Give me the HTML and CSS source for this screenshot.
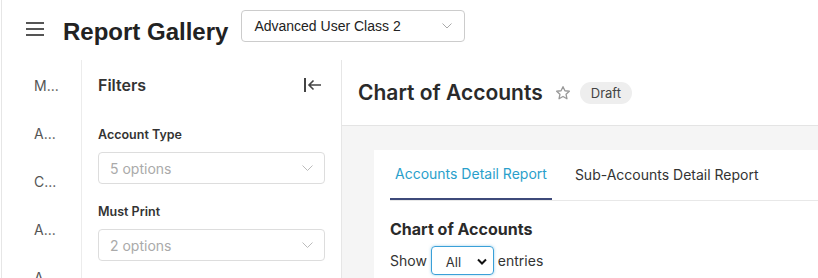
FILE: index.html
```html
<!DOCTYPE html>
<html lang="en">
<head>
    <meta charset="UTF-8">
    <meta name="viewport" content="width=device-width, initial-scale=1.0">
    <title>Report Gallery</title>
    <link rel="stylesheet" href="styles.css">
</head>
<body>
    <div class="page">
        <div class="top-bar">
            <svg class="menu-icon" width="18" height="16" viewBox="0 0 18 16">
                <path d="M0 2h18M0 8h18M0 14h18" stroke="#555" stroke-width="2" fill="none"/>
            </svg>
            <h1 class="page-title">Report Gallery</h1>
            <div class="class-picker">
                <span>Advanced User Class 2</span>
                <svg width="10" height="6" viewBox="0 0 10 6"><path d="M0.5 0.5L5 5L9.5 0.5" stroke="#aaa" fill="none"/></svg>
            </div>
        </div>

        <div class="workspace">
            <div class="rail">
                <div class="rail-item">M...</div>
                <div class="rail-item">A...</div>
                <div class="rail-item">C...</div>
                <div class="rail-item">A...</div>
                <div class="rail-item">A...</div>
            </div>

            <div class="filters">
                <div class="filters-head">
                    <h2>Filters</h2>
                    <svg width="18" height="16" viewBox="0 0 18 16">
                        <path d="M1 1v14" stroke="#444" stroke-width="2" fill="none"/>
                        <path d="M5 8h12M9.5 3.5L5 8l4.5 4.5" stroke="#444" stroke-width="1.6" fill="none"/>
                    </svg>
                </div>
                <label class="filter-label">Account Type</label>
                <div class="filter-select">
                    <span>5 options</span>
                    <svg width="11" height="6" viewBox="0 0 11 6"><path d="M0.5 0.5L5.5 5.5L10.5 0.5" stroke="#bbb" fill="none"/></svg>
                </div>
                <label class="filter-label second">Must Print</label>
                <div class="filter-select">
                    <span>2 options</span>
                    <svg width="11" height="6" viewBox="0 0 11 6"><path d="M0.5 0.5L5.5 5.5L10.5 0.5" stroke="#bbb" fill="none"/></svg>
                </div>
            </div>

            <div class="main">
                <div class="main-head">
                    <h2>Chart of Accounts</h2>
                    <svg class="star" width="16" height="16" viewBox="0 0 24 24">
                        <path d="M12 2.5l2.9 6.1 6.6.8-4.9 4.6 1.3 6.6L12 17.3l-5.9 3.3 1.3-6.6-4.9-4.6 6.6-.8z" stroke="#999" stroke-width="2" fill="none" stroke-linejoin="round"/>
                    </svg>
                    <span class="badge">Draft</span>
                </div>
                <div class="main-body">
                    <div class="card">
                        <div class="tabs">
                            <div class="tab active">Accounts Detail Report</div>
                            <div class="tab">Sub-Accounts Detail Report</div>
                        </div>
                        <h3>Chart of Accounts</h3>
                        <div class="show-row">
                            <span>Show</span>
                            <div class="entries-select">
                                <span>All</span>
                                <svg width="10" height="7" viewBox="0 0 10 7"><path d="M1 1.5L5 5.5L9 1.5" stroke="#111" stroke-width="2" fill="none"/></svg>
                            </div>
                            <span>entries</span>
                        </div>
                    </div>
                </div>
            </div>
        </div>
    </div>
</body>
</html>
```

FILE: styles.css
```css
body {
    margin: 0;
    padding: 0;
    width: 818px;
    height: 278px;
    overflow: hidden;
    background-color: #ffffff;
    font-family: Inter, "Noto Sans", sans-serif;
    color: #333;
}
.page {
    margin-left: 1px;
    border-left: 1px solid #e6e6e6;
    height: 278px;
    overflow: hidden;
}

/* top bar */
.top-bar {
    height: 60px;
    display: flex;
    align-items: center;
    padding-left: 24px;
}
.menu-icon {
    margin-top: -2px;
}
.page-title {
    margin: 0 0 0 19px;
    font-family: "Liberation Sans", Arial, sans-serif;
    font-size: 24px;
    font-weight: bold;
    color: #222;
    margin-top: 4px;
}
.class-picker {
    margin-left: 13px;
    margin-top: -8px;
    width: 224px;
    height: 32px;
    box-sizing: border-box;
    border: 1px solid #ccc;
    border-radius: 4px;
    display: flex;
    align-items: center;
    justify-content: space-between;
    padding: 0 12px 0 12px;
    font-family: "Liberation Sans", Arial, sans-serif;
    font-size: 14px;
    color: #222;
}

.workspace {
    display: flex;
    height: 218px;
}

/* left rail */
.rail {
    width: 79px;
    border-right: 1px solid #ececec;
    padding-top: 2px;
}
.rail-item {
    height: 48px;
    line-height: 48px;
    padding-left: 32px;
    font-size: 14px;
    color: #555;
}

/* filters */
.filters {
    width: 227px;
    padding: 0 16px;
    border-right: 1px solid #e6e6e6;
}
.filters-head {
    height: 50px;
    display: flex;
    align-items: center;
    justify-content: space-between;
    padding-right: 3px;
}
.filters-head h2 {
    margin: 0;
    font-size: 16px;
    font-weight: 600;
    color: #333;
}
.filter-label {
    display: block;
    margin-top: 16px;
    margin-bottom: 8px;
    line-height: 18px;
    font-size: 12.5px;
    font-weight: 600;
    color: #333;
}
.filter-label.second {
    margin-top: 19px;
    margin-bottom: 8px;
}
.filter-select {
    height: 32px;
    box-sizing: border-box;
    border: 1px solid #ddd;
    border-radius: 4px;
    display: flex;
    align-items: center;
    justify-content: space-between;
    padding: 0 11px;
    font-size: 14px;
    color: #aaa;
}

/* main */
.main {
    flex: 1;
}
.main-head {
    height: 65px;
    border-bottom: 1px solid #e4e4e4;
    display: flex;
    align-items: center;
    padding-left: 16px;
}
.main-head h2 {
    margin: 0;
    font-size: 21px;
    font-weight: 600;
    color: #2a2a2a;
}
.star {
    margin-left: 12px;
}
.badge {
    margin-left: 9px;
    height: 22px;
    line-height: 22px;
    padding: 0 11px;
    border-radius: 11px;
    background-color: #eeeeee;
    font-size: 13px;
    color: #444;
}
.main-body {
    background-color: #f5f5f5;
    padding: 24px 0 0 32px;
    height: 128px;
}
.card {
    background-color: #ffffff;
    height: 128px;
    padding-left: 16px;
}
.tabs {
    display: flex;
    border-bottom: 1px solid #e8e8e8;
    height: 50px;
}
.tab {
    padding: 0 5px;
    height: 50px;
    line-height: 50px;
    box-sizing: border-box;
    margin-right: 13px;
    font-size: 14px;
    color: #333;
}
.tab.active {
    color: #2a9fcb;
    border-bottom: 2px solid #3e4a7a;
    line-height: 48px;
    margin-right: 18px;
}
.card h3 {
    margin: 18px 0 0 0;
    line-height: 20px;
    font-size: 16px;
    font-weight: 700;
    color: #2a2a2a;
}
.show-row {
    margin-top: 7px;
    display: flex;
    align-items: center;
    font-size: 14px;
    color: #333;
}
.entries-select {
    margin: 0 4px 0 4px;
    width: 63px;
    height: 29px;
    box-sizing: border-box;
    border: 1px solid #3aa0d8;
    border-radius: 4px;
    box-shadow: 0 0 3px rgba(58, 160, 216, 0.5);
    display: flex;
    align-items: center;
    justify-content: space-between;
    padding: 2px 6px 0 14px;
    font-size: 13px;
    color: #333;
}
```
